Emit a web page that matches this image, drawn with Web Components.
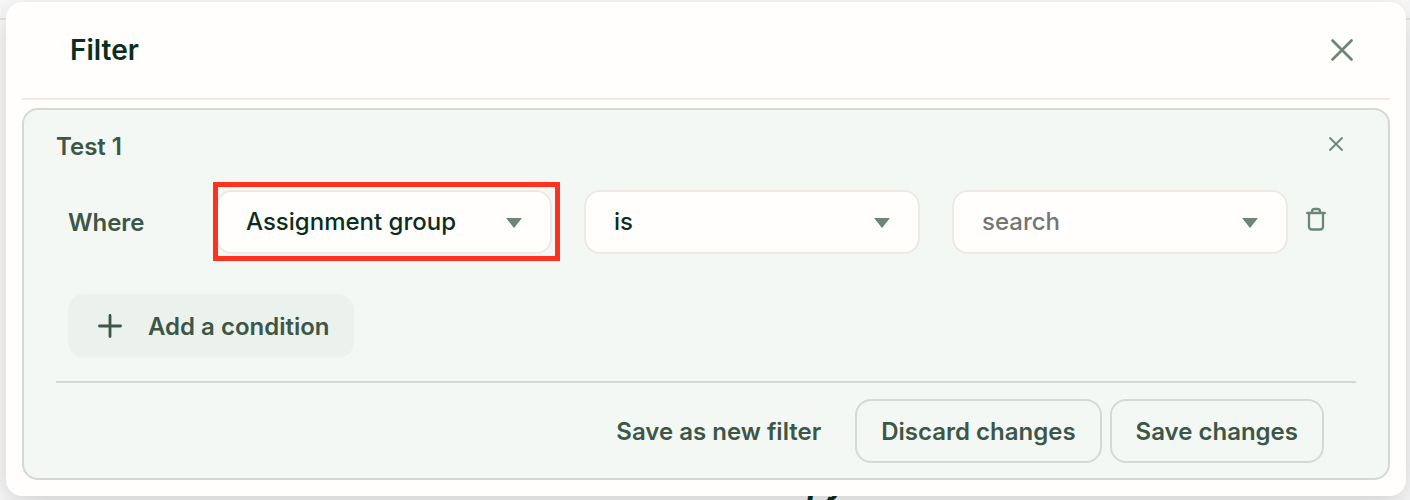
<!DOCTYPE html>
<html lang="en">
<head>
<meta charset="utf-8">
<title>Filter</title>
<style>
  html, body { margin: 0; min-height: 100%; }
  body {
    background: #fbfafa;
    font-family: Inter, "Liberation Sans", sans-serif;
    font-size: 24px;
    line-height: 32px;
    color: #0b2e1c;
    --surface: #fffefd;
    --panel: #f4f8f5;
    --green: #3c5647;
    --icon: #6b8577;
    --line: #d3dad5;
    --sand: #eee9e3;
  }
</style>
</head>
<body>
<filter-page>
  <filter-dialog heading="Filter">
    <filter-card heading="Test 1">
      <condition-row label="Where">
        <pick-field name="Field" value="Assignment group" highlighted></pick-field>
        <pick-field name="Operator" value="is"></pick-field>
        <search-field name="Value" placeholder="search"></search-field>
      </condition-row>
      <action-button kind="soft" icon="plus">Add a condition</action-button>
      <action-button slot="actions" kind="plain">Save as new filter</action-button>
      <action-button slot="actions" kind="outline">Discard changes</action-button>
      <action-button slot="actions" kind="outline">Save changes</action-button>
    </filter-card>
  </filter-dialog>
  <span slot="behind">py</span>
</filter-page>

<script>
const base = `
  *, *::before, *::after { box-sizing: border-box; }
  button, input, select { font: inherit; color: inherit; margin: 0; }
  button { border: 0; padding: 0; background: none; cursor: pointer; }
  svg { display: block; }
`;
const icons = {
  close: `<svg width="24" height="24" viewBox="0 0 24 24" fill="none" stroke="currentColor" stroke-width="2.700" stroke-linecap="round" aria-hidden="true"><path d="M2.500 2.500 21.500 21.500M21.500 2.500 2.500 21.500"/></svg>`,
  closeSmall: `<svg width="16" height="16" viewBox="0 0 16 16" fill="none" stroke="currentColor" stroke-width="1.8" stroke-linecap="round" aria-hidden="true"><path d="M2 2 14 14M14 2 2 14"/></svg>`,
  plus: `<svg width="24" height="24" viewBox="0 0 24 24" fill="none" stroke="currentColor" stroke-width="2.800" stroke-linecap="round" aria-hidden="true"><path d="M12 1.500V22.500M1.500 12H22.500"/></svg>`,
  trash: `<svg width="20" height="24" viewBox="0 0 20 24" fill="none" stroke="currentColor" stroke-width="2.300" stroke-linecap="round" stroke-linejoin="round" aria-hidden="true"><path d="M1.200 6H18.800M3 6V19.500Q3 22.500 6 22.500H14Q17 22.500 17 19.500V6M6 6V4.500Q6 2 8.500 2H11.500Q14 2 14 4.500V6"/></svg>`,
  caret: `<svg width="16" height="10" viewBox="0 0 16 10" fill="currentColor" aria-hidden="true"><path d="M0 0H16L8 10Z"/></svg>`
};
const define = (name, render) => customElements.define(name, class extends HTMLElement {
  connectedCallback() {
    if (this.shadowRoot) return;
    this.attachShadow({ mode: "open" }).innerHTML = render(this);
  }
});

define("filter-page", () => `<style>${base}
  :host { display: block; position: relative; min-height: 100vh; overflow: hidden; padding: 2px 4px 4px 6px; }
  .rule { position: absolute; top: 18px; left: 0; right: 0; height: 2px; background: #ebe5df; }
  .behind { position: absolute; top: 467px; left: 808px; font-size: 32px; font-style: italic; font-weight: 700; line-height: 32px; white-space: nowrap; }
</style><div class="rule"></div><div class="behind"><slot name="behind"></slot></div><slot></slot>`);

define("filter-dialog", el => `<style>${base}
  :host { display: block; position: relative; padding: 0 16px 16px; border-radius: 16px; background: var(--surface); box-shadow: 0 8px 32px rgba(0,0,0,.18); }
  header { display: flex; align-items: center; justify-content: space-between; height: 98px; padding: 0 36px 0 48px; margin-bottom: 8px; border-bottom: 2px solid var(--sand); }
  h1 { margin: 0; font-size: 28px; font-weight: 600; line-height: 36px; }
  button { color: var(--icon); }
</style><header><h1>${el.getAttribute("heading")}</h1><button type="button" aria-label="Close filter">${icons.close}</button></header><slot></slot>`);

define("filter-card", el => `<style>${base}
  :host { display: block; padding: 16px 32px 15px; border: 2px solid var(--line); border-radius: 16px; background: var(--panel); color: var(--green); }
  header { display: flex; align-items: center; justify-content: space-between; height: 40px; padding-right: 12px; margin-bottom: 24px; }
  h2 { margin: 0; padding-top: 2px; font-size: 24px; font-weight: 600; line-height: 32px; }
  button { color: var(--icon); padding-bottom: 4px; }
  .body { display: flex; flex-direction: column; align-items: flex-start; gap: 40px; padding: 0 28px 23px 12px; border-bottom: 2px solid var(--line); }
  footer { display: flex; justify-content: flex-end; gap: 8px; padding: 16px 32px 0 0; }
</style><header><h2>${el.getAttribute("heading")}</h2><button type="button" aria-label="Remove filter">${icons.closeSmall}</button></header>
<div class="body"><slot></slot></div><footer><slot name="actions"></slot></footer>`);

define("condition-row", el => `<style>${base}
  :host { display: flex; align-items: center; width: 100%; font-weight: 600; }
  .label { flex: 0 0 148px; padding-top: 2px; }
  .fields { flex: 1; display: flex; gap: 32px; margin-right: 18px; }
  ::slotted(*) { flex: 1 1 0; min-width: 0; }
  button { color: var(--icon); padding: 0 2px 6px 0; }
</style><span class="label">${el.getAttribute("label")}</span><div class="fields"><slot></slot></div><button type="button" aria-label="Delete condition">${icons.trash}</button>`);

const fieldStyle = `${base}
  :host { display: block; position: relative; font-weight: 500; color: #0b2e1c; }
  .box { display: flex; align-items: center; height: 64px; border: 2px solid var(--sand); border-radius: 16px; background: var(--surface); }
  select, input { flex: 1; width: 100%; min-width: 0; height: 60px; border: 0; border-radius: 14px; padding: 0 64px 0 28px; background: none; appearance: none; outline: 0; }
  input { padding-bottom: 2px; }
  input::placeholder { color: #757575; opacity: 1; }
  svg { position: absolute; right: 30px; top: 28px; color: var(--icon); pointer-events: none; }
  :host([highlighted])::after { content: ""; position: absolute; inset: -8px -8px -7px -3px; border: 5px solid #ff321e; pointer-events: none; }
`;
define("pick-field", el => `<style>${fieldStyle}</style>
<label class="box"><select aria-label="${el.getAttribute("name")}"><option>${el.getAttribute("value")}</option></select>${icons.caret}</label>`);
define("search-field", el => `<style>${fieldStyle}</style>
<label class="box"><input type="text" aria-label="${el.getAttribute("name")}" placeholder="${el.getAttribute("placeholder")}">${icons.caret}</label>`);

define("action-button", el => `<style>${base}
  :host { display: block; font-weight: 600; color: var(--green); }
  button { display: flex; align-items: center; height: 64px; padding: 0 24px; border: 2px solid transparent; border-radius: 16px; white-space: nowrap; }
  .text { padding-top: 2px; }
  :host([kind=soft]) button { gap: 26px; padding: 0 22px 0 28px; background: #ebf1ed; }
  :host([kind=outline]) button { border-color: var(--line); }
</style><button type="button">${icons[el.getAttribute("icon")] || ""}<span class="text"><slot></slot></span></button>`);
</script>
</body>
</html>
